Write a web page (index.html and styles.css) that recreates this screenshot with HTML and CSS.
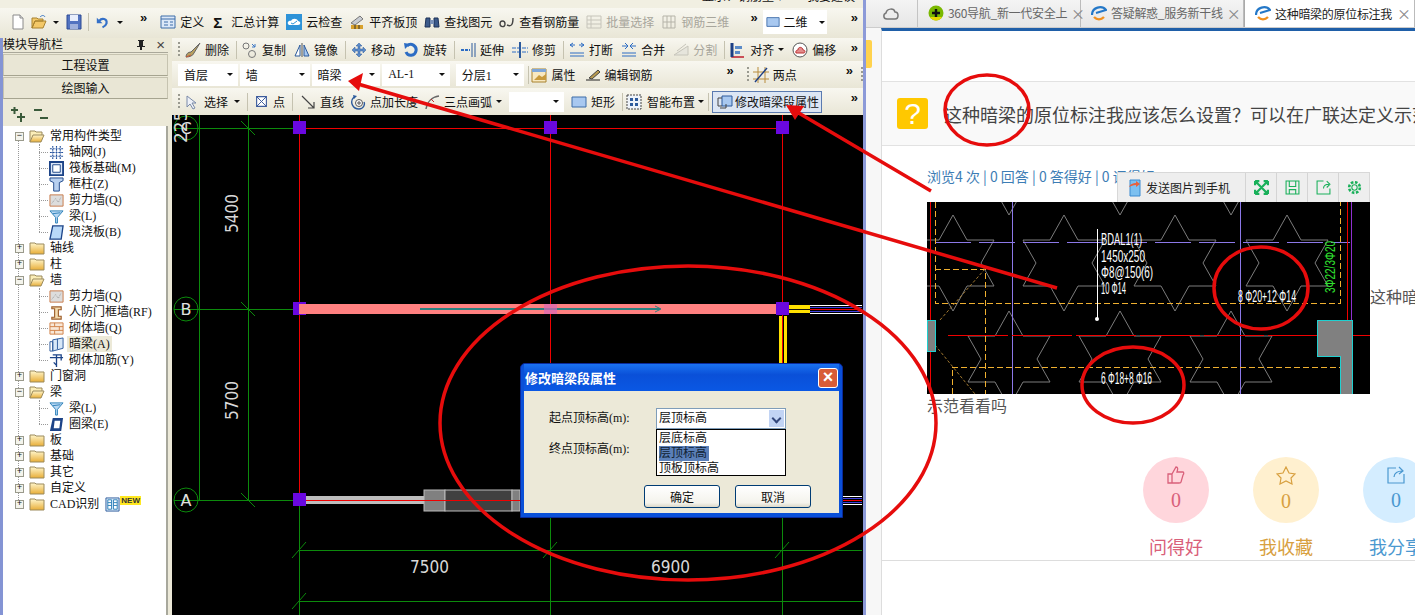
FILE: index.html
```html
<!DOCTYPE html>
<html lang="zh-CN">
<head>
<meta charset="utf-8">
<title>修改暗梁段属性</title>
<link rel="stylesheet" href="styles.css">
</head>
<body>
<svg class="defs" width="0" height="0" aria-hidden="true">
  <defs>
    <symbol id="i-new" viewBox="0 0 16 16"><path d="M3 1h7l3 3v11H3z" fill="#fff" stroke="#8a8a8a"/><path d="M10 1v3h3" fill="#ddd" stroke="#8a8a8a"/></symbol>
    <symbol id="i-open" viewBox="0 0 16 16"><path d="M1 14V4h5l1 1h5v2H4L1 14l3-7h11l-3 7z" fill="#f3c868" stroke="#a8822e"/><path d="M9 3c2-2 4-2 5 0" fill="none" stroke="#3a76c4"/></symbol>
    <symbol id="i-save" viewBox="0 0 16 16"><path d="M1 1h14v14H1z" fill="#5273c0" stroke="#2c4a94"/><path d="M4 1h8v6H4z" fill="#e8eefc"/><path d="M4 10h8v5H4z" fill="#9fb1dc"/></symbol>
    <symbol id="i-undo" viewBox="0 0 16 16"><path d="M4 6c3-4 10-3 9 3-1 3-3 4-5 5" fill="none" stroke="#3470c8" stroke-width="2.6"/><path d="M1 2v7h7z" fill="#3470c8"/></symbol>
    <symbol id="i-def" viewBox="0 0 16 16"><path d="M1 2h14v12H1z" fill="#dce8f8" stroke="#3d6ca8"/><path d="M1 5h14M4 8h4M10 8h3M4 11h4M10 11h3" stroke="#3d6ca8"/></symbol>
    <symbol id="i-cloud" viewBox="0 0 16 16"><path d="M0 0h16v16H0z" fill="#2e93d8"/><path d="M3 11c-3-2 0-5 2-4 1-3 6-3 7 0 3 0 3 4 0 4z" fill="#fff"/><path d="M5 9l2 1 4-3" fill="none" stroke="#2e93d8"/></symbol>
    <symbol id="i-level" viewBox="0 0 16 16"><path d="M2 9l9-7 3 3-8 6z" fill="#c8ccd2" stroke="#777"/><path d="M2 11h12v4H2z" fill="#d8a12c"/><path d="M6 11v4M10 11v4" stroke="#333"/></symbol>
    <symbol id="i-find" viewBox="0 0 16 16"><path d="M2 4h4v9H1zM10 4h4l1 9h-5z" fill="#3c5a8a" stroke="#1d3157"/><path d="M6 6h4v4H6z" fill="#7b92b8"/></symbol>
    <symbol id="i-rebar" viewBox="0 0 16 16"><path d="M1 10c0-4 5-4 5 0s-5 3-5 0z" fill="none" stroke="#444" stroke-width="1.4"/><path d="M8 11c4 2 6 0 6-7" fill="none" stroke="#444" stroke-width="1.4"/></symbol>
    <symbol id="i-batch" viewBox="0 0 16 16"><path d="M1 2h14v12H1zM5 2v12M1 6h14M1 10h14" fill="none" stroke="#c6c4ba"/></symbol>
    <symbol id="i-3d" viewBox="0 0 16 16"><path d="M2 2h12v12H2zM6 2v12M10 2v12M2 8h12" fill="none" stroke="#b5b3a8"/></symbol>
    <symbol id="i-2d" viewBox="0 0 16 16"><path d="M1 3h14v10H1z" fill="#a8c8f0" stroke="#3d6ca8"/></symbol>
    <symbol id="i-del" viewBox="0 0 16 16"><path d="M1 15c0-3 2-5 5-5l9-9-6 10c-1 3-5 4-8 4z" fill="#b8a060" stroke="#666"/><path d="M1 15l5-2" stroke="#c53"/></symbol>
    <symbol id="i-copy" viewBox="0 0 16 16"><circle cx="4" cy="4" r="3" fill="none" stroke="#777"/><circle cx="10" cy="12" r="3.5" fill="none" stroke="#777"/><path d="M10 2l3 3M13 2v3h-3" fill="none" stroke="#3a76c4"/></symbol>
    <symbol id="i-mirror" viewBox="0 0 16 16"><path d="M8 1v14" stroke="#555"/><path d="M6 3L1 14h5z" fill="#fff" stroke="#2c5a9c"/><path d="M10 3l5 11h-5z" fill="#a8c8f0" stroke="#2c5a9c"/></symbol>
    <symbol id="i-move" viewBox="0 0 16 16"><path d="M8 1l3 3H9v3h3V5l3 3-3 3V9H9v3h2l-3 3-3-3h2V9H4v2L1 8l3-3v2h3V4H5z" fill="#5b8bc8" stroke="#2c5a9c" stroke-width=".5"/></symbol>
    <symbol id="i-rotate" viewBox="0 0 16 16"><path d="M4 4c4-4 10 0 9 5-1 5-8 6-10 1" fill="none" stroke="#2c6cc4" stroke-width="3"/><path d="M1 1l6 1-5 5z" fill="#2c6cc4"/></symbol>
    <symbol id="i-extend" viewBox="0 0 16 16"><path d="M1 8h9" stroke="#2c6cc4" stroke-width="2" stroke-dasharray="3 1"/><path d="M12 1v14M15 1v14" stroke="#2c5a9c"/></symbol>
    <symbol id="i-trim" viewBox="0 0 16 16"><path d="M0 6h16M0 10h16" stroke="#2c6cc4" stroke-dasharray="4 1"/><path d="M8 0v16" stroke="#2c5a9c" stroke-width="2"/></symbol>
    <symbol id="i-break" viewBox="0 0 16 16"><path d="M1 11h14M1 14h14" stroke="#2c6cc4"/><path d="M1 3h5M10 3h5M4 1L1 3l3 2M12 1l3 2-3 2" fill="none" stroke="#2c6cc4"/></symbol>
    <symbol id="i-merge" viewBox="0 0 16 16"><path d="M1 11h14M1 14h14" stroke="#2c6cc4"/><path d="M1 4h5M10 4h5M4 1l3 3-3 3M12 1L9 4l3 3" fill="none" stroke="#2c6cc4"/></symbol>
    <symbol id="i-split" viewBox="0 0 16 16"><path d="M1 13L15 4v9z" fill="#e6e5dc" stroke="#c6c4ba"/><path d="M4 9l9-7" stroke="#c6c4ba"/></symbol>
    <symbol id="i-align" viewBox="0 0 16 16"><path d="M2 1v14h12" fill="none" stroke="#c01c2c" stroke-width="1.5"/><path d="M2 1v14" stroke="#1d3f84" stroke-width="3"/><path d="M5 4h7v3H5zM5 9h5v3H5z" fill="#5b8bc8"/></symbol>
    <symbol id="i-offset" viewBox="0 0 16 16"><circle cx="8" cy="8" r="7" fill="#fff" stroke="#555"/><path d="M4 11c-1-3 2-3 2-3 0-4 5-3 5 0 3 0 2 3 1 3z" fill="#e38b8b" stroke="#b33"/></symbol>
    <symbol id="i-prop" viewBox="0 0 16 16"><path d="M1 2h14v13H1z" fill="#f8e8c0" stroke="#a8822e"/><path d="M1 2h14v3H1z" fill="#7ea6d8"/><path d="M3 13l5-5 3 2 4-3v6H3z" fill="#c89a3c"/></symbol>
    <symbol id="i-edit" viewBox="0 0 16 16"><path d="M1 13h14" stroke="#222"/><path d="M4 11l9-8 2 2-8 7z" fill="#b89a50" stroke="#444"/></symbol>
    <symbol id="i-two" viewBox="0 0 16 16"><path d="M0 5h16M0 12h16M5 0v16M12 0v16" stroke="#b88c3c"/><path d="M2 15L14 1" stroke="#1d3f84" stroke-width="1.4"/></symbol>
    <symbol id="i-sel" viewBox="0 0 16 16"><path d="M1 2v11l3-3 3 5 2-1-3-5h4z" fill="#eef1f8" stroke="#7a8aa8"/></symbol>
    <symbol id="i-pt" viewBox="0 0 16 16"><path d="M2 2h12v12H2z" fill="#fff" stroke="#3d5c9c" stroke-width="1.4"/><path d="M2 2l12 12M14 2L2 14" stroke="#3d5c9c" stroke-width="1.2"/></symbol>
    <symbol id="i-line" viewBox="0 0 16 16"><path d="M2 2l12 12M14 8v6H8" fill="none" stroke="#444" stroke-width="1.2"/></symbol>
    <symbol id="i-ptlen" viewBox="0 0 16 16"><path d="M4 3C-1 8 3 15 9 15c5 0 6-5 5-7" fill="none" stroke="#2c5a9c" stroke-width="1.4"/><path d="M3 1l4 1-3 3z" fill="#2c5a9c"/><circle cx="9" cy="9" r="3.5" fill="#fff" stroke="#555"/><path d="M7 9h4M9 7v4" stroke="#555"/></symbol>
    <symbol id="i-arc" viewBox="0 0 16 16"><path d="M2 15C3 8 8 3 15 2" fill="none" stroke="#666" stroke-width="1.4"/><path d="M7 5l3 3" stroke="#c03030"/></symbol>
    <symbol id="i-rect" viewBox="0 0 16 16"><path d="M1 3h14v10H1z" fill="#a8c8f0" stroke="#3d6ca8"/></symbol>
    <symbol id="i-smart" viewBox="0 0 16 16"><path d="M1 1h14v14H1z" fill="#eef3fa" stroke="#444" stroke-dasharray="2 1"/><path d="M4 4h3v3H4zM9 4h3v3H9zM4 9h3v3H4zM9 9h3v3H9z" fill="#2c5a9c"/></symbol>
    <symbol id="i-beam" viewBox="0 0 16 16"><path d="M5 2h10v10H5z" fill="#a8c8f0" stroke="#2c5a9c"/><path d="M5 4H1v8h4M3 14h6v-4" fill="none" stroke="#444"/></symbol>
    <symbol id="i-plus2" viewBox="0 0 16 16"><path d="M1 3h7M4.500 0v7M7 10h8M11 6v9" stroke="#3a5a3a" stroke-width="2"/></symbol>
    <symbol id="i-minus2" viewBox="0 0 16 16"><path d="M1 3h8M7 11h8" stroke="#3a5a3a" stroke-width="2"/></symbol>
    <symbol id="i-pin" viewBox="0 0 10 12"><path d="M2 1h6v1H7v5h2v1H6v3H4V8H1V7h2V2H2z" fill="#222"/></symbol>
    <symbol id="f-closed" viewBox="0 0 16 16"><path d="M1 3h5l1 1h8v10H1z" fill="url(#gf)" stroke="#9b8a5c"/></symbol>
    <symbol id="f-open" viewBox="0 0 16 16"><path d="M1 14V3h5l1 1h6v3" fill="#fbeeb8" stroke="#9b8a5c"/><path d="M1 14l3-7h11l-3 7z" fill="url(#gf)" stroke="#9b8a5c"/></symbol>
    <linearGradient id="gf" x1="0" y1="0" x2="0" y2="1"><stop offset="0" stop-color="#fff6cc"/><stop offset="1" stop-color="#e8ae38"/></linearGradient>
    <symbol id="t-grid" viewBox="0 0 16 16"><path d="M1 4h14M1 8h14M1 12h14M4 1v14M8 1v14M12 1v14" stroke="#23509c" stroke-width="1.2" stroke-dasharray="2 1"/></symbol>
    <symbol id="t-raft" viewBox="0 0 16 16"><path d="M1 1h14v14H1z" fill="#dde8f8" stroke="#1d4488" stroke-width="2"/><path d="M4 4h8v8H4z" fill="#fff" stroke="#1d4488"/></symbol>
    <symbol id="t-col" viewBox="0 0 16 16"><path d="M1 1h14v3l-4 2v9H5V6L1 4z" fill="#b8d0f0" stroke="#1d4488"/></symbol>
    <symbol id="t-wall" viewBox="0 0 16 16"><path d="M1 2h14v12H1z" fill="#ddd" stroke="#c87848"/><path d="M3 11l4-5 3 4 3-6" stroke="#999" stroke-dasharray="1 1" fill="none"/></symbol>
    <symbol id="t-beam" viewBox="0 0 16 16"><path d="M1 2h14L9 9v6H7V9z" fill="#b8d8f4" stroke="#2c80b8"/><path d="M4 5l8-1" stroke="#2c80b8"/></symbol>
    <symbol id="t-slab" viewBox="0 0 16 16"><path d="M4 1h11l-2 14H1z" fill="#b8d8f8" stroke="#1d4488" stroke-width="1.4"/></symbol>
    <symbol id="t-door" viewBox="0 0 16 16"><path d="M3 2h10v3h-3v7h3v3H3v-2h3V4H3z" fill="#f4dcb0" stroke="#9c5c28" stroke-width="1.2"/></symbol>
    <symbol id="t-brick" viewBox="0 0 16 16"><path d="M1 2h14v12H1zM1 6h14M1 10h14M6 2v4M11 6v4M6 10v4" fill="#f8e8d8" stroke="#d08048"/></symbol>
    <symbol id="t-ab" viewBox="0 0 16 16"><path d="M4 3l11-2v11L4 15z" fill="#d8e8f8" stroke="#2c5a9c"/><path d="M1 5h3v10H1zM9 2v11" fill="none" stroke="#2c5a9c"/></symbol>
    <symbol id="t-bar" viewBox="0 0 16 16"><path d="M1 5h14M4 2h9v6M8 2v13M5 10l3 3" fill="none" stroke="#1d4488" stroke-width="1.4"/></symbol>
    <symbol id="t-ring" viewBox="0 0 16 16"><path d="M4 1h11l-2 14H1z" fill="#1d4488"/><path d="M6 4h6l-1 8H5z" fill="#fff"/></symbol>
    <symbol id="t-cad" viewBox="0 0 16 16"><path d="M1 1h14v14H1z" fill="#dcecfa" stroke="#2c5a9c"/><path d="M3 3h4v10H3zM9 3h4v10H9z" fill="#fff" stroke="#2c80b8"/><path d="M3 6h4M3 9h4M9 6h4M9 9h4" stroke="#2c80b8"/></symbol>
    <symbol id="star" viewBox="-42 -49 84 98"><path d="M0-48L-14-23H-41L-28 0-41 23H-14L0 48 14 23H41L28 0 41-23H14z" fill="none" stroke="#7c7c7c"/></symbol>
  </defs>
</svg>

<div class="screen">
  <section class="app">
    <div class="topstrip"><span class="topstrip-text">显示：钢筋量 ▾　　我要建议</span></div>
    <div class="tb tb-first">
      <svg class="ic ic-first"><use href="#i-new"/></svg>
      <span class="tl tl-arrow"><svg class="ic"><use href="#i-open"/></svg><i class="dd"></i></span>
      <svg class="ic"><use href="#i-save"/></svg>
      <i class="sep"></i>
      <span class="tl tl-undo"><svg class="ic ic-s"><use href="#i-undo"/></svg><i class="dd"></i></span>
      <b class="more more-a">»</b>
      <span class="tl"><svg class="ic"><use href="#i-def"/></svg>定义</span>
      <span class="tl"><b class="sigma">Σ</b>汇总计算</span>
      <span class="tl"><svg class="ic"><use href="#i-cloud"/></svg>云检查</span>
      <span class="tl"><svg class="ic"><use href="#i-level"/></svg>平齐板顶</span>
      <span class="tl"><svg class="ic"><use href="#i-find"/></svg>查找图元</span>
      <span class="tl"><svg class="ic"><use href="#i-rebar"/></svg>查看钢筋量</span>
      <span class="tl off"><svg class="ic"><use href="#i-batch"/></svg>批量选择</span>
      <span class="tl off"><svg class="ic"><use href="#i-3d"/></svg>钢筋三维</span>
      <b class="more more-b">»</b>
      <span class="view"><svg class="ic"><use href="#i-2d"/></svg>二维<i class="dd"></i></span>
      <b class="more more-end">»</b>
    </div>

    <div class="workspace">
      <aside class="nav">
        <div class="nav-head"><span>模块导航栏</span><span class="nav-ctl"><svg class="pin"><use href="#i-pin"/></svg><span class="nav-x">×</span></span></div>
        <div class="nav-btn">工程设置</div>
        <div class="nav-btn">绘图输入</div>
        <div class="nav-tools"><svg class="ic"><use href="#i-plus2"/></svg><svg class="ic"><use href="#i-minus2"/></svg></div>
        <div class="tree">
          <div class="node"><i class="ex">−</i><svg class="fld"><use href="#f-open"/></svg>常用构件类型</div>
          <div class="kids">
            <div class="leaf"><svg class="lic"><use href="#t-grid"/></svg>轴网(J)</div>
            <div class="leaf"><svg class="lic"><use href="#t-raft"/></svg>筏板基础(M)</div>
            <div class="leaf"><svg class="lic"><use href="#t-col"/></svg>框柱(Z)</div>
            <div class="leaf"><svg class="lic"><use href="#t-wall"/></svg>剪力墙(Q)</div>
            <div class="leaf"><svg class="lic"><use href="#t-beam"/></svg>梁(L)</div>
            <div class="leaf"><svg class="lic"><use href="#t-slab"/></svg>现浇板(B)</div>
          </div>
          <div class="node"><i class="ex">+</i><svg class="fld"><use href="#f-closed"/></svg>轴线</div>
          <div class="node"><i class="ex">+</i><svg class="fld"><use href="#f-closed"/></svg>柱</div>
          <div class="node"><i class="ex">−</i><svg class="fld"><use href="#f-open"/></svg>墙</div>
          <div class="kids">
            <div class="leaf"><svg class="lic"><use href="#t-wall"/></svg>剪力墙(Q)</div>
            <div class="leaf"><svg class="lic"><use href="#t-door"/></svg>人防门框墙(RF)</div>
            <div class="leaf"><svg class="lic"><use href="#t-brick"/></svg>砌体墙(Q)</div>
            <div class="leaf"><svg class="lic"><use href="#t-ab"/></svg><span class="cur">暗梁(A)</span></div>
            <div class="leaf"><svg class="lic"><use href="#t-bar"/></svg>砌体加筋(Y)</div>
          </div>
          <div class="node"><i class="ex">+</i><svg class="fld"><use href="#f-closed"/></svg>门窗洞</div>
          <div class="node"><i class="ex">−</i><svg class="fld"><use href="#f-open"/></svg>梁</div>
          <div class="kids">
            <div class="leaf"><svg class="lic"><use href="#t-beam"/></svg>梁(L)</div>
            <div class="leaf"><svg class="lic"><use href="#t-ring"/></svg>圈梁(E)</div>
          </div>
          <div class="node"><i class="ex">+</i><svg class="fld"><use href="#f-closed"/></svg>板</div>
          <div class="node"><i class="ex">+</i><svg class="fld"><use href="#f-closed"/></svg>基础</div>
          <div class="node"><i class="ex">+</i><svg class="fld"><use href="#f-closed"/></svg>其它</div>
          <div class="node"><i class="ex">+</i><svg class="fld"><use href="#f-closed"/></svg>自定义</div>
          <div class="node"><i class="ex">+</i><svg class="fld"><use href="#f-closed"/></svg>CAD识别<svg class="lic cad-ic"><use href="#t-cad"/></svg><span class="newtag">NEW</span></div>
        </div>
      </aside>

      <main class="main">
        <div class="tb tb2">
          <i class="grip"></i>
          <span class="tl"><svg class="ic"><use href="#i-del"/></svg>删除</span><i class="sep"></i>
          <span class="tl"><svg class="ic"><use href="#i-copy"/></svg>复制</span>
          <span class="tl"><svg class="ic"><use href="#i-mirror"/></svg>镜像</span><i class="sep"></i>
          <span class="tl"><svg class="ic"><use href="#i-move"/></svg>移动</span>
          <span class="tl"><svg class="ic"><use href="#i-rotate"/></svg>旋转</span><i class="sep"></i>
          <span class="tl"><svg class="ic"><use href="#i-extend"/></svg>延伸</span>
          <span class="tl"><svg class="ic"><use href="#i-trim"/></svg>修剪</span><i class="sep"></i>
          <span class="tl"><svg class="ic"><use href="#i-break"/></svg>打断</span>
          <span class="tl"><svg class="ic"><use href="#i-merge"/></svg>合并</span>
          <span class="tl off"><svg class="ic"><use href="#i-split"/></svg>分割</span><i class="sep"></i>
          <span class="tl"><svg class="ic"><use href="#i-align"/></svg>对齐<i class="dd"></i></span>
          <span class="tl"><svg class="ic"><use href="#i-offset"/></svg>偏移</span>
          <b class="more more-end">»</b>
        </div>
        <div class="tb tb3">
          <span class="sel sel-a">首层<i class="dd"></i></span>
          <span class="sel sel-b">墙<i class="dd"></i></span>
          <span class="sel sel-c">暗梁<i class="dd"></i></span>
          <span class="sel sel-d">AL-1<i class="dd"></i></span>
          <span class="sel sel-e">分层1<i class="dd"></i></span>
          <i class="sep"></i>
          <span class="tl"><svg class="ic"><use href="#i-prop"/></svg>属性</span>
          <span class="tl"><svg class="ic"><use href="#i-edit"/></svg>编辑钢筋</span>
          <b class="more more-c">»</b>
          <i class="grip grip-d"></i>
          <span class="tl"><svg class="ic"><use href="#i-two"/></svg>两点</span>
          <b class="more more-e">»</b>
          <i class="grip"></i>
        </div>
        <div class="tb tb4">
          <i class="grip"></i>
          <span class="tl tl-sel"><svg class="ic"><use href="#i-sel"/></svg>选择<i class="dd"></i></span><i class="sep"></i>
          <span class="tl tl-wide"><svg class="ic ic-s"><use href="#i-pt"/></svg>点</span><i class="sep"></i>
          <span class="tl tl-line"><svg class="ic"><use href="#i-line"/></svg>直线</span>
          <span class="tl tl-ptlen"><svg class="ic"><use href="#i-ptlen"/></svg>点加长度</span>
          <span class="tl tl-arc"><svg class="ic"><use href="#i-arc"/></svg>三点画弧<i class="dd"></i></span>
          <span class="sel sel-f"><i class="dd"></i></span>
          <span class="tl"><svg class="ic"><use href="#i-rect"/></svg>矩形</span><i class="sep"></i>
          <span class="tl tl-smart"><svg class="ic"><use href="#i-smart"/></svg>智能布置<i class="dd"></i></span><i class="sep sep-n"></i>
          <span class="tl tl-on"><svg class="ic"><use href="#i-beam"/></svg>修改暗梁段属性</span>
          <b class="more more-end">»</b>
        </div>

        <svg class="cad" viewBox="172 115 691 500" role="img" aria-label="CAD 绘图区">
          <g stroke="#0c8a0c" fill="none">
            <path d="M199 115V500M248 115V500M174 128H299M174 309H299M174 500H299"/>
            <path class="soft" d="M241 121l14 14M241 302l14 14M241 493l14 14"/>
            <path d="M299 500V615M550 517V615M782 517V615M299 550H862M299 601H862"/>
            <path class="soft" d="M292 558l14-16M543 558l14-16M775 558l14-16M292 609l14-16"/>
            <circle cx="186" cy="128" r="12"/><circle cx="186" cy="309" r="12"/><circle cx="186" cy="500" r="12"/>
          </g>
          <g class="cad-txt">
            <text x="186" y="134" text-anchor="middle" class="t-axis">C</text>
            <text x="186" y="315" text-anchor="middle" class="t-axis">B</text>
            <text x="186" y="506" text-anchor="middle" class="t-axis">A</text>
            <text transform="translate(187 143) rotate(-90)" class="t-dim">225</text>
            <text transform="translate(238 233) rotate(-90)" class="t-dim" textLength="39" lengthAdjust="spacingAndGlyphs">5400</text>
            <text transform="translate(238 420) rotate(-90)" class="t-dim" textLength="39" lengthAdjust="spacingAndGlyphs">5700</text>
            <text x="410" y="573" class="t-dim" textLength="39" lengthAdjust="spacingAndGlyphs">7500</text>
            <text x="651" y="573" class="t-dim" textLength="39" lengthAdjust="spacingAndGlyphs">6900</text>
          </g>
          <path d="M299 115V500M550 115V363M782 115V363M299 128H782" stroke="#f00000" fill="none"/>
          <g fill="#6a08e0">
            <rect x="293" y="121" width="13" height="13"/><rect x="544" y="121" width="13" height="13"/><rect x="776" y="121" width="13" height="13"/>
            <rect x="293" y="302" width="13" height="13"/><rect x="293" y="493" width="13" height="13"/>
          </g>
          <rect x="299" y="304" width="483" height="10" fill="#ff8080"/>
          <rect x="776" y="302" width="13" height="13" fill="#6a08e0"/>
          <path d="M420 309H660" stroke="#2a8080" stroke-width="2"/>
          <path class="soft" d="M655 306l6 3-6 3" fill="none" stroke="#2a8080"/>
          <rect x="779" y="316" width="3" height="47" fill="#ffe000"/><rect x="784" y="316" width="3" height="47" fill="#ffe000"/>
          <rect x="789" y="305" width="21" height="8" fill="#ffe000"/><path d="M789 309H810" stroke="#111"/>
          <path d="M810 305H862M810 313H862" stroke="#fff"/><path d="M810 307H862M810 311H862" stroke="#4040e0"/><path d="M810 309H862" stroke="#f00000"/>
          <path d="M842 496H862M842 504H862" stroke="#fff"/><path d="M842 498H862M842 502H862" stroke="#4040e0"/><path d="M842 500H862" stroke="#f00000"/>
          <rect x="544" y="304" width="13" height="10" fill="#d868b8" opacity=".7"/>
          <rect x="306" y="496" width="118" height="8" fill="#bdbdbd"/>
          <rect x="424" y="490" width="21" height="21" fill="#808080" stroke="#bbb"/>
          <rect x="445" y="490" width="67" height="21" fill="#404040" stroke="#bbb"/>
          <rect x="512" y="490" width="8" height="21" fill="#808080" stroke="#bbb"/>
          <path d="M306 500H520" stroke="#f00000"/>
        </svg>
      </main>
    </div>
  </section>

  <section class="browser">
    <div class="tabs">
      <span class="tab-cloud"><svg width="18" height="16" viewBox="0 0 18 16"><path d="M5 13C1 13 1 8 4 7 5 2 12 2 13 6c4 0 4 7 0 7z" fill="none" stroke="#777" stroke-width="1.5"/></svg></span>
      <span class="tab"><svg class="fav" viewBox="0 0 16 16"><circle cx="8" cy="8" r="7.500" fill="#7ab800"/><path d="M2 12a7 7 0 0 0 12 0z" fill="#e8d800"/><path d="M8 4v8M4 8h8" stroke="#111" stroke-width="2.400"/></svg><span class="tab-t">360导航_新一代安全上</span><span class="tab-x">×</span></span>
      <span class="tab"><svg class="fav" viewBox="0 0 16 16"><path d="M1 10C1 2 11 0 15 5L5 8" fill="none" stroke="#2478c8" stroke-width="2.200"/><path d="M3 12c3 3 7 3 10 0" fill="none" stroke="#f09020" stroke-width="2.400"/></svg><span class="tab-t">答疑解惑_服务新干线</span><span class="tab-x">×</span></span>
      <span class="tab tab-on"><svg class="fav" viewBox="0 0 16 16"><path d="M1 10C1 2 11 0 15 5L5 8" fill="none" stroke="#2478c8" stroke-width="2.200"/><path d="M3 12c3 3 7 3 10 0" fill="none" stroke="#f09020" stroke-width="2.400"/></svg><span class="tab-t">这种暗梁的原位标注我</span><span class="tab-x">×</span></span>
    </div>
    <div class="pagewrap">
      <div class="gutter"><i class="handle"></i></div>
      <article class="page">
        <div class="page-blank"></div>
        <header class="question"><span class="qmark">?</span><h1 class="qtitle">这种暗梁的原位标注我应该怎么设置？可以在广联达定义示范看看吗</h1></header>
        <p class="stats">浏览4 次 | 0 回答 | 0 答得好 | 0 评得好</p>
        <div class="figrow">
          <figure class="figure">
            <div class="imgbar">
              <span class="imgbar-send"><svg width="14" height="18" viewBox="0 0 14 18"><path d="M2 1h10v16H2z" fill="#7cc0f0" stroke="#3a8ad0"/><path d="M1 8c1-3 4-4 7-4V2l4 3-4 3V6C5 6 3 7 1 8z" fill="#e8603c"/></svg>发送图片到手机</span>
              <span class="imgbar-btn"><svg width="15" height="15" viewBox="0 0 14 14"><path d="M1 1l12 12M13 1L1 13M1 1h4M1 1v4M13 1H9M13 1v4M1 13h4M1 13V9M13 13H9M13 13V9" fill="none" stroke="#19b05a" stroke-width="2"/></svg></span>
              <span class="imgbar-btn"><svg width="15" height="15" viewBox="0 0 14 14"><path d="M1 1h12v12H1zM4 1v5h6V1M4 13V9h6v4" fill="none" stroke="#19b05a"/></svg></span>
              <span class="imgbar-btn"><svg width="15" height="15" viewBox="0 0 14 14"><path d="M7 1H1v12h12V8M7 8c0-3 2-4 5-4M10 1l3 3-3 3" fill="none" stroke="#19b05a"/></svg></span>
              <span class="imgbar-btn"><svg width="15" height="15" viewBox="0 0 14 14"><circle cx="7" cy="7" r="2.500" fill="none" stroke="#19b05a"/><circle cx="7" cy="7" r="5" fill="none" stroke="#19b05a" stroke-width="2.400" stroke-dasharray="2.400 1.500"/></svg></span>
            </div>
            <svg class="shot" viewBox="927 202 443 192" role="img" aria-label="暗梁配筋图">
              <rect x="927" y="202" width="443" height="192" fill="#000"/>
              <use href="#star" x="911" y="214" width="84" height="98"/><use href="#star" x="1022" y="214" width="84" height="98"/><use href="#star" x="1133" y="214" width="84" height="98"/><use href="#star" x="1245" y="214" width="84" height="98"/>
              <use href="#star" x="967" y="118" width="84" height="98"/><use href="#star" x="1078" y="118" width="84" height="98"/><use href="#star" x="1189" y="118" width="84" height="98"/>
              <use href="#star" x="967" y="310" width="84" height="98"/><use href="#star" x="1078" y="310" width="84" height="98"/><use href="#star" x="1189" y="310" width="84" height="98"/>
              <use href="#star" x="911" y="406" width="84" height="98"/>
              <path d="M1012 202V394M1240 202V394" stroke="#8c78e8"/>
              <path d="M935 242H1350" stroke="#8c78e8" stroke-dasharray="36 8"/>
              <path d="M935 202V303H1340V202M952 394V367H1340M935 269H985V394" fill="none" stroke="#f0b030" stroke-dasharray="6 3"/>
              <path class="soft" d="M940 320L985 269M935 345l40 49" fill="none" stroke="#a07830" stroke-dasharray="3 2"/>
              <path d="M930 202V394" stroke="#f00000"/>
              <path d="M948 335H1370" stroke="#f00000" stroke-dasharray="60 4"/>
              <path d="M1347 202V320" stroke="#f00000"/><path d="M1351 202V320" stroke="#9030d0"/>
              <path d="M927 320h8v31h-8z" fill="#808080" stroke="#20d0d0"/>
              <path d="M1317 320h35v74h-12v-38h-23z" fill="#808080" stroke="#20d0d0"/>
              <path d="M1097 229V319" stroke="#fff"/><circle cx="1097" cy="319" r="2" fill="#fff"/>
              <g class="t-cad">
                <text x="1101" y="245" textLength="41" lengthAdjust="spacingAndGlyphs">BDAL1(1)</text>
                <text x="1101" y="262" textLength="44" lengthAdjust="spacingAndGlyphs">1450x250</text>
                <text x="1101" y="278" textLength="52" lengthAdjust="spacingAndGlyphs">Φ8@150(6)</text>
                <text x="1101" y="294" textLength="25" lengthAdjust="spacingAndGlyphs">10 Φ14</text>
                <text x="1238" y="302" textLength="58" lengthAdjust="spacingAndGlyphs">8 Φ20+12 Φ14</text>
                <text x="1101" y="384" textLength="51" lengthAdjust="spacingAndGlyphs">6 Φ18+8 Φ16</text>
                <text transform="translate(1335 293) rotate(-90)" textLength="52" lengthAdjust="spacingAndGlyphs" class="t-green">3Φ22/3Φ20</text>
              </g>
            </svg>
          </figure>
          <span class="after">这种暗梁的原位标注</span>
        </div>
        <p class="afterline">示范看看吗</p>
        <div class="actions">
          <div class="act act-good"><span class="circle"><svg width="18" height="18" viewBox="0 0 18 18"><path d="M1 8h4v9H1zM5 8l4-7c2 0 2 2 1 5h6c1 0 1 2 0 3l-2 7c0 1-1 1-2 1H5" fill="none" stroke="currentColor" stroke-width="1.300"/></svg><b>0</b></span><span class="act-l">问得好</span></div>
          <div class="act act-fav"><span class="circle"><svg width="20" height="19" viewBox="0 0 20 19"><path d="M10 1l3 6 6 1-4 4 1 6-6-3-6 3 1-6-4-4 6-1z" fill="none" stroke="currentColor" stroke-width="1.200"/></svg><b>0</b></span><span class="act-l">我收藏</span></div>
          <div class="act act-share"><span class="circle"><svg width="18" height="18" viewBox="0 0 18 18"><path d="M9 2H1v15h16V8M7 11c0-4 4-6 8-6M12 1l4 4-4 3" fill="none" stroke="currentColor" stroke-width="1.200"/></svg><b>0</b></span><span class="act-l">我分享</span></div>
        </div>
        <hr class="rule">
      </article>
    </div>
  </section>

  <div class="dialog" role="dialog">
    <div class="dlg-title"><span>修改暗梁段属性</span><span class="dlg-close">×</span></div>
    <div class="dlg-body">
      <div class="field"><span class="field-l">起点顶标高(m):</span>
        <div class="combo">层顶标高<i class="combo-btn"></i>
          <ul class="combo-list"><li>层底标高</li><li><span class="hl">层顶标高</span></li><li>顶板顶标高</li></ul>
        </div>
      </div>
      <div class="field field-2"><span class="field-l">终点顶标高(m):</span></div>
      <div class="dlg-btns"><button class="btn">确定</button><button class="btn">取消</button></div>
    </div>
  </div>

  <svg class="annot" viewBox="0 0 1415 615" aria-hidden="true">
    <g fill="none" stroke="#e60c0c" stroke-width="3.500">
      <ellipse cx="987" cy="110" rx="42" ry="35"/>
      <ellipse cx="1261" cy="288" rx="47" ry="41"/>
      <ellipse cx="1133" cy="385" rx="51" ry="38"/>
      <ellipse cx="688" cy="423" rx="248" ry="157"/>
      <path d="M1057 288L358 84M931 191L797 112"/>
    </g>
    <path d="M348 81l15-8-4 18zM786 105l18 1-9 14z" fill="#e60c0c"/>
  </svg>
</div>
</body>
</html>
```

FILE: styles.css
```css
* { box-sizing: border-box; }
html, body { margin: 0; padding: 0; background: #fff; }
body { font-family: "Liberation Serif", "Noto Sans CJK SC", sans-serif; font-size: 12px; color: #111; overflow: hidden; }
.defs { position: absolute; }
i { font-style: normal; }
.screen { position: relative; display: flex; width: 1415px; height: 615px; overflow: hidden; }

/* application */
.app { width: 863px; height: 615px; display: flex; flex-direction: column; background: #ece9d8; }
.topstrip { height: 8px; overflow: hidden; background: #f1efe2; display: flex; justify-content: flex-end; padding-right: 8px; }
.topstrip-text { margin-top: -10px; line-height: 14px; }
.tb { display: flex; align-items: center; gap: 8px; white-space: nowrap; background: linear-gradient(#f8f7f0, #e9e6d6); }
.tb-first { height: 30px; padding: 0 0 2px 10px; gap: 7px; }
.tb-first .sep { margin: 0 0 0 -1px; }
.ic-first { margin-right: -2px; }
.workspace { flex: 1; display: flex; min-height: 0; }
.main { width: 691px; display: flex; flex-direction: column; }
.tb2 { height: 23px; padding-left: 6px; }
.tb2 .grip { margin-right: -3px; }
.tb3 { height: 27px; padding-left: 6px; gap: 2px; }
.tb4 { height: 27px; padding-left: 6px; gap: 7px; }
.tb4 .grip { margin-right: -1px; }
.tb4 .sep { margin: 0; }
.tb4 .sep-n { margin: 0 -4px 0 -3px; }
.ic { width: 16px; height: 16px; flex: none; }
.ic-s { width: 13px; height: 13px; }
.tl { display: inline-flex; align-items: center; gap: 4px; }
.tl-arrow { gap: 6px; }
.tl-undo { gap: 8px; }
.tl-sel { gap: 2px; }
.tl-sel .dd { margin-left: 4px; }
.tl-wide { gap: 5px; }
.tl-ptlen { margin-left: -1px; }
.tl-arc { margin-left: -1px; }
.tl-smart { gap: 3px; margin-left: -4px; }
.tl-smart .ic { margin-right: 2px; }
.off { color: #a8a69c; }
.sep { width: 1px; height: 18px; background: #c5c2b0; margin: 0 -3px 0 -1px; flex: none; }
.grip { width: 2px; height: 16px; flex: none; background: repeating-linear-gradient(#9a9a90 0 2px, transparent 2px 4px); }
.grip-d { margin-left: 11px; margin-right: -1px; }
.dd { width: 0; height: 0; flex: none; border: 3px solid transparent; border-top: 3px solid #111; border-bottom: 0; }
.more { font: bold 13px/1 "Liberation Sans", sans-serif; align-self: flex-start; margin-top: 3px; }
.more-a { margin-left: 10px; margin-right: 6px; }
.more-b { margin-left: 14px; margin-right: -2px; }
.more-c { margin-left: 68px; }
.more-e { margin-left: 43px; margin-right: 6px; }
.more-end { margin-left: auto; margin-right: 5px; }
.sigma { font: bold 15px "Liberation Sans", sans-serif; margin: 0 5px 0 2px; }
.view { display: inline-flex; align-items: center; gap: 4px; background: #fff; width: 64px; height: 24px; padding-left: 3px; }
.view .ic { width: 14px; }
.view .dd { margin-left: 7px; }
.sel { display: inline-flex; align-items: center; justify-content: space-between; height: 22px; background: #fff; padding: 0 5px 0 6px; }
.sel-a { width: 61px; }
.sel-b { width: 71px; }
.sel-c { width: 70px; }
.sel-d { width: 69px; margin-right: 4px; }
.sel-e { width: 70px; margin-right: 3px; }
.sel-f { width: 55px; justify-content: flex-end; height: 20px; }
.tb3 .tl { margin: 0 4px 0 3px; }
.tl-on { width: 110px; height: 22px; padding: 0 0 0 4px; gap: 2px; background: #dce6f4; border: 1px solid #5a7ab0; }
.cad { display: block; width: 691px; height: 500px; flex: none; background: #000; }
.cad path, .shot path { shape-rendering: crispEdges; }
.cad path.soft, .shot path.soft { shape-rendering: auto; }
.t-dim { font: 17px "DejaVu Sans", sans-serif; fill: #d8d8d8; }
.t-axis { font: 16px "DejaVu Sans", sans-serif; fill: #e0e0e0; }

/* navigator */
.nav { width: 172px; border-left: 3px solid #8494d4; padding-right: 4px; display: flex; flex-direction: column; }
.nav-head { height: 15px; display: flex; justify-content: space-between; align-items: center; line-height: 14px; border-bottom: 1px solid #aaa89a; padding-right: 3px; }
.nav-ctl { display: flex; align-items: center; gap: 10px; }
.pin { width: 10px; height: 12px; }
.nav-x { font: 15px/12px "Liberation Sans", sans-serif; color: #444; }
.nav-btn { height: 22px; margin-top: 1px; line-height: 22px; text-align: center; background: #e9e6d5; border: 1px solid #c6c3b0; border-bottom-color: #a6a490; }
.nav-tools { height: 26px; display: flex; align-items: center; gap: 7px; padding: 3px 0 0 7px; margin-top: 1px; }
.tree { position: relative; flex: 1; background: #fff; border-right: 2px solid #a8a89c; padding: 2px 0 0 0; }
.tree::before { content: ""; position: absolute; left: 15px; top: 10px; height: 368px; border-left: 1px dotted #999; }
.node, .leaf { position: relative; height: 16px; line-height: 16px; display: flex; align-items: center; white-space: nowrap; }
.ex { position: relative; width: 9px; height: 9px; margin-left: 12px; border: 1px solid #9a9a8c; background: #f4f4ec; font: 9px/7px "Liberation Mono", monospace; text-align: center; flex: none; }
.fld { width: 16px; height: 16px; margin: 0 5px 0 5px; flex: none; }
.kids { position: relative; padding-left: 46px; }
.kids::before { content: ""; position: absolute; left: 36px; top: 0; bottom: 8px; border-left: 1px dotted #999; }
.leaf::before { content: ""; position: absolute; left: -10px; top: 8px; width: 9px; border-top: 1px dotted #999; }
.lic { width: 15px; height: 15px; margin-right: 5px; flex: none; }
.cur { background: #ece9d8; padding: 0 2px; margin-left: -2px; }
.cad-ic { margin-left: 6px; margin-right: 0; }
.newtag { align-self: flex-start; font: bold 8px/9px "Liberation Sans", sans-serif; background: #ffe820; padding: 0 1px; color: #333; height: 9px; }

/* browser */
.browser { flex: 1; display: flex; flex-direction: column; border-left: 3px solid #8c9ad8; min-width: 0; }
.tabs { display: flex; align-items: stretch; height: 28px; background: linear-gradient(#f4f4f4, #e6e6e6); font-family: "Noto Sans CJK SC", sans-serif; border-bottom: 1px solid #ccc; overflow: hidden; }
.tab-cloud { width: 52px; padding-left: 16px; display: flex; align-items: center; border-right: 1px solid #c4c4c4; }
.tab { width: 163px; flex: none; display: flex; align-items: center; gap: 4px; padding: 0 3px 2px 10px; border-right: 1px solid #bbb; color: #666; }
.tab-on { background: #fff; color: #222; width: 171px; height: 28px; border-left: 1px solid #aaa; }
.fav { width: 16px; height: 16px; flex: none; }
.tab-t { flex: 1; white-space: nowrap; letter-spacing: -.3px; }
.tab-x { color: #888; font-size: 14px; line-height: 14px; }
.pagewrap { flex: 1; display: flex; min-height: 0; }
.gutter { width: 15px; background: #f7f7f7; padding-top: 12px; flex: none; }
.handle { display: block; width: 6px; height: 28px; background: #ffd24d; border-radius: 0 2px 2px 0; }
.page { flex: 1; border-top: 3px solid #1f5fa8; border-left: 1px solid #ddd; overflow: hidden; font-family: "Noto Sans CJK SC", sans-serif; min-width: 0; }
.page-blank { height: 50px; }
.question { height: 65px; display: flex; align-items: center; gap: 16px; padding-left: 15px; background: #f9f9f9; border-top: 1px solid #e2e2e2; border-bottom: 1px solid #e2e2e2; }
.qmark { width: 31px; height: 31px; flex: none; border-radius: 3px; background: #ffc800; color: #fff; font: 30px/31px "Liberation Sans", sans-serif; text-align: center; }
.qtitle { margin: 0; font-size: 18px; font-weight: 400; color: #444; white-space: nowrap; line-height: 24px; }
.stats { margin: 0; padding: 20px 0 0 45px; font-size: 14px; line-height: 21px; color: #3d7db5; height: 56px; white-space: nowrap; }
.figrow { display: flex; align-items: center; padding-left: 45px; height: 192px; }
.figure { position: relative; margin: 0; width: 443px; height: 192px; flex: none; }
.shot { display: block; width: 443px; height: 192px; }
.imgbar { position: absolute; right: 0; top: -30px; height: 30px; width: 253px; display: flex; background: #eee; border: 1px solid #d8d8d8; border-bottom: 0; }
.imgbar-send { flex: 1; display: flex; align-items: center; gap: 4px; padding-left: 10px; color: #222; }
.imgbar-btn { width: 31px; flex: none; display: flex; align-items: center; justify-content: center; border-left: 1px solid #d4d4d4; }
.t-cad text { font: 16px "Liberation Sans", sans-serif; fill: #fff; }
.t-cad text.t-green { font-size: 14px; fill: #30e030; }
.after { font-size: 16px; color: #555; white-space: nowrap; margin-top: -4px; }
.afterline { margin: 0 0 0 45px; font-size: 16px; line-height: 23px; color: #555; }
.actions { display: flex; padding: 40px 0 0 239px; }
.act { width: 110px; flex: none; display: flex; flex-direction: column; align-items: center; }
.circle { width: 66px; height: 66px; border-radius: 50%; display: flex; flex-direction: column; align-items: center; padding-top: 9px; }
.circle b { font: 400 20px/24px "Liberation Serif", serif; margin-top: 4px; }
.act-l { font-size: 18px; line-height: 24px; margin-top: 11px; }
.act-good { color: #d9607a; } .act-good .circle { background: #ffd6dc; }
.act-fav { color: #d8a040; } .act-fav .circle { background: #fff0cf; }
.act-share { color: #4a98d0; } .act-share .circle { background: #d4edff; }
.rule { margin: 2px 0 0; border: 0; border-top: 1px solid #ddd; }

/* dialog */
.dialog { position: absolute; left: 520px; top: 363px; width: 323px; height: 155px; background: #0a50d8; border: 1px solid #0a2a9a; border-radius: 5px 5px 0 0; padding: 0 3px 4px; display: flex; flex-direction: column; }
.dlg-title { height: 27px; flex: none; display: flex; align-items: center; justify-content: space-between; padding: 0 1px; color: #fff; font: bold 13px "Noto Sans CJK SC", sans-serif; background: linear-gradient(#1a72f0, #0a50d8 40%, #0a58e4); }
.dlg-close { width: 20px; height: 20px; border: 1px solid #fff; border-radius: 3px; background: #d85c38; font: bold 18px/17px "Liberation Sans", sans-serif; text-align: center; }
.dlg-body { flex: 1; background: #ece9d8; padding: 17px 0 0 25px; }
.field { display: flex; height: 21px; align-items: center; }
.field-l { width: 107px; flex: none; padding-bottom: 4px; }
.field-2 { margin-top: 10px; }
.combo { position: relative; width: 130px; height: 21px; background: #fff; border: 1px solid #7f9db9; line-height: 19px; padding-left: 2px; }
.combo-btn { position: absolute; right: 1px; top: 1px; width: 15px; height: 17px; background: #c2d4f4; }
.combo-btn::after { content: ""; position: absolute; left: 4px; top: 5px; width: 5px; height: 5px; border: solid #34487c; border-width: 0 2px 2px 0; transform: rotate(45deg); }
.combo-list { position: absolute; left: -1px; top: 20px; width: 130px; height: 47px; margin: 0; padding: 1px 0 0 2px; list-style: none; background: #fff; border: 1px solid #000; line-height: 15px; z-index: 1; }
.hl { background: #5a7fb8; color: #123; display: inline-block; width: 50px; }
.dlg-btns { display: flex; justify-content: flex-end; gap: 15px; padding-right: 28px; margin-top: 25px; }
.btn { width: 76px; height: 23px; padding: 0; font: inherit; color: #111; border: 1px solid #003c74; border-radius: 3px; background: linear-gradient(#fff, #f4f3ec 80%, #dcd8c8); }

/* annotation */
.annot { position: absolute; left: 0; top: 0; width: 1415px; height: 615px; pointer-events: none; }
```
